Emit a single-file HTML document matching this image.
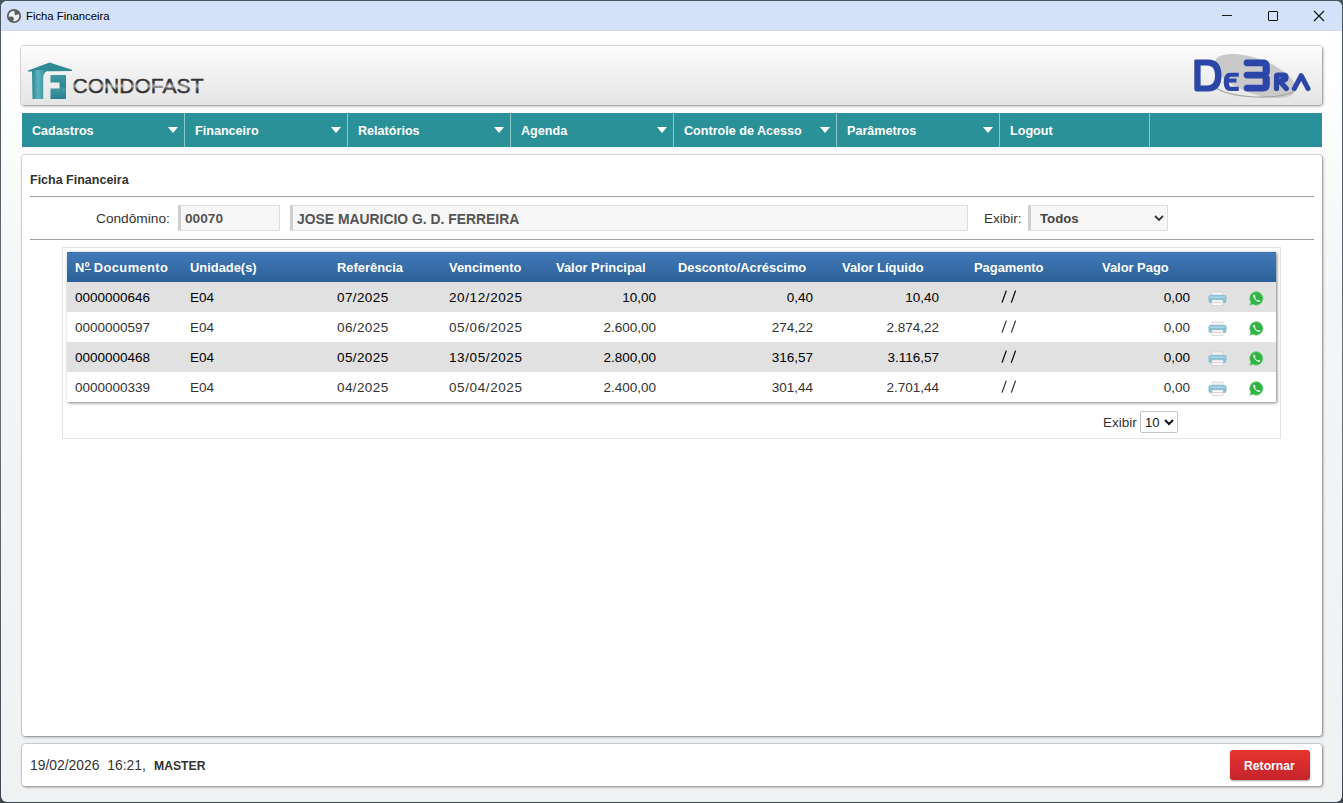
<!DOCTYPE html>
<html><head><meta charset="utf-8"><style>
*{margin:0;padding:0;box-sizing:border-box}
html,body{width:1343px;height:803px;overflow:hidden;font-family:"Liberation Sans",sans-serif}
body{background:linear-gradient(to bottom,#4a5560,#6a7078 50%,#3c4650);position:relative}
.tx{position:absolute;line-height:20px;white-space:pre}
.abs{position:absolute}
#win{position:absolute;left:1px;top:1px;width:1341px;height:801px;border-radius:6px;overflow:hidden;background:linear-gradient(to bottom,#ffffff 0px,#ffffff 60px,#f4f5f6 300px,#eff1f2 803px)}
#title{position:absolute;left:0;top:0;width:1341px;height:30px;background:#d3e2f8;border-bottom:1px solid #d0dbea}
.card{position:absolute;background:#fff;border-radius:3px;box-shadow:0 0 0 0.5px rgba(0,0,0,.14),0 0 2px rgba(0,0,0,.18),1px 1px 3px rgba(0,0,0,.38)}
#hdr{left:21px;top:46px;width:1301px;height:59px;background:linear-gradient(to bottom,#fdfdfd,#f1f1f1 45%,#e5e5e5)}
#menu{position:absolute;left:22px;top:113px;width:1300px;height:34px;background:#2b9199}
.sep{position:absolute;top:113px;width:1px;height:34px;background:#8cc8cc}
.tri{position:absolute;width:0;height:0;border-left:5px solid transparent;border-right:5px solid transparent;border-top:6px solid #fff}
#main{left:22px;top:155px;width:1300px;height:581px}
#foot{left:22px;top:744px;width:1300px;height:42px}
.rule{position:absolute;height:1px;background:#a0a0a0}
.inp{position:absolute;background:#f7f7f7;border:1px solid #dedede;border-left:3px solid #cfcfcf}
</style></head><body>
<div id="win"><div id="title"><svg class="abs" style="left:4.5px;top:6.5px" width="16" height="16" viewBox="0 0 16 16">
<circle cx="8" cy="8" r="6.2" fill="#eef3fb" stroke="#5c5c5c" stroke-width="1.8"/>
<path d="M8 1.7 C10.5 1.8 13 3.5 14 6 C13 6.5 11.5 6 10.5 6.8 C9.8 7.5 9 7 8.6 6.2 C8.3 5.2 9.2 4.4 8.4 3.6 C7.6 2.9 6.8 2.4 8 1.7 Z" fill="#5c5c5c"/>
<path d="M2.2 9.6 C3.5 8.3 5.5 8.4 6.8 9 C7.6 9.4 8.3 10.4 7.8 11.4 C7.2 12.4 6.4 13 6.6 14.1 C4.6 13.6 2.8 11.9 2.2 9.6 Z" fill="#5c5c5c"/>
</svg></div></div>
<div class="tx" style="left:26px;top:6px;font-size:11.3px;font-weight:normal;color:#000;">Ficha Financeira</div>
<div class="abs" style="left:1222px;top:15px;width:10px;height:1px;background:#1a1a1a"></div><div class="abs" style="left:1268px;top:11px;width:10px;height:10px;border:1.2px solid #111;border-radius:1px"></div><svg class="abs" style="left:1313px;top:10px" width="12" height="12" viewBox="0 0 12 12"><path d="M1 1L11 11M11 1L1 11" stroke="#111" stroke-width="1.1"/></svg>
<div class="card" id="hdr"></div>
<svg class="abs" style="left:0;top:0" width="220" height="110" viewBox="0 0 220 110">
<defs>
<linearGradient id="tg" x1="0" y1="0" x2="0" y2="1"><stop offset="0" stop-color="#3f9aa6"/><stop offset="0.45" stop-color="#2f8794"/><stop offset="0.6" stop-color="#3d98a3"/><stop offset="1" stop-color="#2a7f8c"/></linearGradient>
<linearGradient id="tg2" x1="0" y1="0" x2="1" y2="0"><stop offset="0" stop-color="#2c8591"/><stop offset="0.35" stop-color="#5cb3bf"/><stop offset="0.7" stop-color="#3a97a3"/><stop offset="1" stop-color="#2c8390"/></linearGradient>
<linearGradient id="mg" x1="0" y1="0" x2="0" y2="1"><stop offset="0" stop-color="#2a2a2a"/><stop offset="0.35" stop-color="#3a3a3a"/><stop offset="0.5" stop-color="#a0a0a0"/><stop offset="0.65" stop-color="#3a3a3a"/><stop offset="1" stop-color="#222"/></linearGradient>
</defs>
<path d="M28 70.5 L49.5 62.5 L72 69.8 L72 71 L28 71.5 Z" fill="#2f8a96"/>
<path d="M32 70 L49 70 C45 71 43.2 74 43.2 79 L43.2 99 L32.5 99 Z" fill="url(#tg2)"/>
<path d="M50.5 75 L66 75 L66 99 L50.5 99 L50.5 88.5 L59.5 88.5 L59.5 82.5 L50.5 82.5 Z" fill="url(#tg)"/>
<text x="72.5" y="93" font-family="Liberation Sans" font-weight="normal" font-size="20" textLength="131" lengthAdjust="spacingAndGlyphs" fill="url(#mg)" stroke="url(#mg)" stroke-width="0.45">CONDOFAST</text>
</svg><svg class="abs" style="left:1180px;top:45px" width="140" height="60" viewBox="1180 45 140 60">
<ellipse cx="1255" cy="76" rx="43" ry="17.5" transform="rotate(20 1255 76)" fill="#c9c9c9"/><path d="M1216 88 C1230 97 1270 101 1293 92" fill="none" stroke="#a4a4a4" stroke-width="1.2"/>
<g fill="#2b45a8">
<path d="M1195.5 59.6 L1208 59.6 C1217 59.6 1221.5 65 1221.5 75.5 C1221.5 86 1217 91.6 1208 91.6 L1197 91.6 C1195.5 91.6 1194.3 90.5 1194.3 89 L1194.3 61 C1194.3 60.2 1194.8 59.6 1195.5 59.6 Z M1200.6 65.4 L1200.6 85.4 L1207 85.4 C1212.5 85.4 1215 82 1215 75.4 C1215 68.8 1212.5 65.4 1207 65.4 Z" fill-rule="evenodd"/>
<path d="M1230 72.7 L1238.8 72.7 L1238.8 76.8 L1231 76.8 C1229.5 76.8 1229 77.5 1229 78.6 L1236.5 78.6 L1236.5 82.4 L1229 82.4 C1229 85.5 1229.8 86.8 1231.5 86.8 L1238.8 86.8 L1238.8 91 L1230.5 91 C1226 91 1223.8 88 1223.8 82 C1223.8 76 1226 72.7 1230 72.7 Z"/>
<path d="M1246.5 59.5 L1263 59.5 C1267.5 59.5 1269.8 62 1269.8 66.5 L1269.8 72.5 C1269.8 74 1269 75 1268 75.2 C1269 75.4 1269.8 76.5 1269.8 78 L1269.8 84.5 C1269.8 89 1267.5 91.4 1263 91.4 L1246.8 91.4 C1245 91.4 1243.6 90 1243.6 88 C1243.6 86.2 1245 84.8 1246.8 84.8 L1262.6 84.8 L1262.6 78.5 L1246.8 78.5 C1245 78.5 1243.6 77 1243.6 75.2 C1243.6 73.3 1245 71.8 1246.8 71.8 L1262.6 71.8 L1262.6 66.2 L1246.5 66.2 C1244.8 66.2 1243.6 64.8 1243.6 62.9 C1243.6 61 1244.8 59.5 1246.5 59.5 Z"/>
<path d="M1276.5 88.5 L1276.5 76.5 C1276.5 75.6 1277 75.2 1278 75.2 L1283.5 75.2 C1285.2 75.2 1286 76 1286 77.5 C1286 79 1285 80 1283 80.3 L1279.5 81 L1286.3 88.6" fill="none" stroke="#2b45a8" stroke-width="5.2" stroke-linecap="round" stroke-linejoin="round"/>
<path d="M1294.3 88.6 L1301.2 75.6 L1308 88.6" fill="none" stroke="#2b45a8" stroke-width="5" stroke-linecap="round" stroke-linejoin="round"/>
</g>
</svg><div id="menu"></div>
<div class="tx" style="left:32px;top:121px;font-size:12.6px;font-weight:bold;color:#fff;">Cadastros</div>
<div class="tri" style="left:168px;top:127px"></div><div class="sep" style="left:184px"></div><div class="tx" style="left:195px;top:121px;font-size:12.6px;font-weight:bold;color:#fff;">Financeiro</div>
<div class="tri" style="left:331px;top:127px"></div><div class="sep" style="left:347px"></div><div class="tx" style="left:358px;top:121px;font-size:12.6px;font-weight:bold;color:#fff;">Relatórios</div>
<div class="tri" style="left:494px;top:127px"></div><div class="sep" style="left:510px"></div><div class="tx" style="left:521px;top:121px;font-size:12.6px;font-weight:bold;color:#fff;">Agenda</div>
<div class="tri" style="left:657px;top:127px"></div><div class="sep" style="left:673px"></div><div class="tx" style="left:684px;top:121px;font-size:12.6px;font-weight:bold;color:#fff;">Controle de Acesso</div>
<div class="tri" style="left:820px;top:127px"></div><div class="sep" style="left:836px"></div><div class="tx" style="left:847px;top:121px;font-size:12.6px;font-weight:bold;color:#fff;">Parâmetros</div>
<div class="tri" style="left:983px;top:127px"></div><div class="sep" style="left:999px"></div><div class="tx" style="left:1010px;top:121px;font-size:12.6px;font-weight:bold;color:#fff;">Logout</div>
<div class="sep" style="left:1149px"></div>
<div class="card" id="main"></div>
<div class="tx" style="left:30px;top:170px;font-size:12.5px;font-weight:bold;color:#333;">Ficha Financeira</div>
<div class="rule" style="left:30px;top:196px;width:1284px"></div><div class="rule" style="left:30px;top:239px;width:1284px"></div>
<div class="tx" style="left:96px;top:209px;font-size:13.7px;font-weight:normal;color:#333;">Condômino:</div>
<div class="inp" style="left:178px;top:205px;width:102px;height:26px"></div><div class="tx" style="left:185px;top:209px;font-size:13.7px;font-weight:bold;color:#555;">00070</div>
<div class="inp" style="left:290px;top:205px;width:678px;height:26px"></div><div class="tx" style="left:297px;top:209px;font-size:13.9px;font-weight:bold;color:#555;">JOSE MAURICIO G. D. FERREIRA</div>
<div class="tx" style="left:984px;top:209px;font-size:13.5px;font-weight:normal;color:#333;">Exibir:</div>
<div class="inp" style="left:1028px;top:205px;width:140px;height:26px"></div><div class="tx" style="left:1040px;top:209px;font-size:13.2px;font-weight:bold;color:#444;">Todos</div>
<svg class="abs" style="left:1154px;top:215px" width="10" height="7" viewBox="0 0 10 7"><path d="M1 1L5 5L9 1" fill="none" stroke="#333" stroke-width="1.8"/></svg>
<div class="abs" style="left:62px;top:247px;width:1219px;height:192px;border:1px solid #e3e3e3;background:#fff"></div>
<div class="abs" style="left:67px;top:252px;width:1209px;height:150px;box-shadow:1px 1px 3px rgba(0,0,0,.5);background:#fff"></div><div class="abs" style="left:67px;top:252px;width:1209px;height:30px;background:linear-gradient(to bottom,#33649a 0px,#4179b8 1px,#2c6299 29px,#285a8e 30px)"></div><div class="abs" style="left:67px;top:282px;width:1209px;height:30px;background:#e1e1e1"></div><div class="abs" style="left:67px;top:342px;width:1209px;height:30px;background:#e1e1e1"></div>
<div class="tx" style="left:75px;top:258px;font-size:12.9px;font-weight:bold;color:#fff;letter-spacing:0.4px">Nº Documento</div>
<div class="tx" style="left:190px;top:258px;font-size:12.9px;font-weight:bold;color:#fff;">Unidade(s)</div>
<div class="tx" style="left:337px;top:258px;font-size:12.9px;font-weight:bold;color:#fff;">Referência</div>
<div class="tx" style="left:449px;top:258px;font-size:12.9px;font-weight:bold;color:#fff;">Vencimento</div>
<div class="tx" style="left:556px;top:258px;font-size:12.9px;font-weight:bold;color:#fff;">Valor Principal</div>
<div class="tx" style="left:678px;top:258px;font-size:12.9px;font-weight:bold;color:#fff;">Desconto/Acréscimo</div>
<div class="tx" style="left:842px;top:258px;font-size:12.9px;font-weight:bold;color:#fff;">Valor Líquido</div>
<div class="tx" style="left:974px;top:258px;font-size:12.9px;font-weight:bold;color:#fff;">Pagamento</div>
<div class="tx" style="left:1102px;top:258px;font-size:12.9px;font-weight:bold;color:#fff;">Valor Pago</div>
<div class="abs" style="left:85px;top:269px;width:6px;height:1px;background:#fff"></div>
<div class="tx" style="left:75px;top:288px;font-size:13.5px;font-weight:normal;color:#000;">0000000646</div>
<div class="tx" style="left:190px;top:288px;font-size:13.5px;font-weight:normal;color:#000;">E04</div>
<div class="tx" style="left:337px;top:288px;font-size:13.5px;font-weight:normal;color:#000;letter-spacing:0.4px">07/2025</div>
<div class="tx" style="left:449px;top:288px;font-size:13.5px;font-weight:normal;color:#000;letter-spacing:0.6px">20/12/2025</div>
<div class="tx" style="right:687px;top:288px;font-size:13.5px;font-weight:normal;color:#000;">10,00</div>
<div class="tx" style="right:530px;top:288px;font-size:13.5px;font-weight:normal;color:#000;">0,40</div>
<div class="tx" style="right:404px;top:288px;font-size:13.5px;font-weight:normal;color:#000;">10,40</div>
<svg class="abs" style="left:1000px;top:290px" width="18" height="14" viewBox="0 0 18 14"><path d="M2 12.6L6.3 0.6M11.3 12.6L15.6 0.6" stroke="#000" stroke-width="1.25"/></svg><div class="tx" style="right:153px;top:288px;font-size:13.5px;font-weight:normal;color:#000;">0,00</div>
<svg class="abs" style="left:1208px;top:291px" width="19" height="16" viewBox="0 0 19 16">
<rect x="4" y="1" width="11" height="3" fill="#f4f4f4" stroke="#c8c8c8" stroke-width="0.6"/>
<rect x="0.5" y="4" width="18" height="8" rx="2.2" fill="#86c0d6"/>
<rect x="2" y="5.5" width="15" height="1.3" fill="#b0dbe9"/>
<rect x="4" y="9" width="11" height="5.5" fill="#fafafa" stroke="#c8c8c8" stroke-width="0.6"/>
<rect x="5" y="11.2" width="9" height="0.8" fill="#e8c0c0"/>
</svg><svg class="abs" style="left:1249px;top:291px" width="15" height="15" viewBox="0 0 15 15">
<path d="M7.5 0.6 A6.8 6.8 0 1 1 4.0 13.4 L0.7 14.3 L1.7 11.1 A6.8 6.8 0 0 1 7.5 0.6Z" fill="#2fb544" stroke="#8fd89a" stroke-width="0.7"/>
<path d="M4.6 3.8 C4.0 4.6 4.1 6.0 5.4 7.8 C6.8 9.8 8.6 11.0 10.0 11.0 C10.8 11.0 11.3 10.3 11.2 9.8 L9.8 9.0 C9.4 8.9 9.1 9.6 8.8 9.6 C8.0 9.3 6.3 7.8 5.9 6.8 C5.9 6.4 6.6 6.2 6.5 5.7 L5.8 4.0 C5.5 3.6 5.0 3.5 4.6 3.8Z" fill="#fff"/>
</svg>
<div class="tx" style="left:75px;top:318px;font-size:13.5px;font-weight:normal;color:#333;">0000000597</div>
<div class="tx" style="left:190px;top:318px;font-size:13.5px;font-weight:normal;color:#333;">E04</div>
<div class="tx" style="left:337px;top:318px;font-size:13.5px;font-weight:normal;color:#333;letter-spacing:0.4px">06/2025</div>
<div class="tx" style="left:449px;top:318px;font-size:13.5px;font-weight:normal;color:#333;letter-spacing:0.6px">05/06/2025</div>
<div class="tx" style="right:687px;top:318px;font-size:13.5px;font-weight:normal;color:#333;">2.600,00</div>
<div class="tx" style="right:530px;top:318px;font-size:13.5px;font-weight:normal;color:#333;">274,22</div>
<div class="tx" style="right:404px;top:318px;font-size:13.5px;font-weight:normal;color:#333;">2.874,22</div>
<svg class="abs" style="left:1000px;top:320px" width="18" height="14" viewBox="0 0 18 14"><path d="M2 12.6L6.3 0.6M11.3 12.6L15.6 0.6" stroke="#333" stroke-width="1.25"/></svg><div class="tx" style="right:153px;top:318px;font-size:13.5px;font-weight:normal;color:#333;">0,00</div>
<svg class="abs" style="left:1208px;top:321px" width="19" height="16" viewBox="0 0 19 16">
<rect x="4" y="1" width="11" height="3" fill="#f4f4f4" stroke="#c8c8c8" stroke-width="0.6"/>
<rect x="0.5" y="4" width="18" height="8" rx="2.2" fill="#86c0d6"/>
<rect x="2" y="5.5" width="15" height="1.3" fill="#b0dbe9"/>
<rect x="4" y="9" width="11" height="5.5" fill="#fafafa" stroke="#c8c8c8" stroke-width="0.6"/>
<rect x="5" y="11.2" width="9" height="0.8" fill="#e8c0c0"/>
</svg><svg class="abs" style="left:1249px;top:321px" width="15" height="15" viewBox="0 0 15 15">
<path d="M7.5 0.6 A6.8 6.8 0 1 1 4.0 13.4 L0.7 14.3 L1.7 11.1 A6.8 6.8 0 0 1 7.5 0.6Z" fill="#2fb544" stroke="#8fd89a" stroke-width="0.7"/>
<path d="M4.6 3.8 C4.0 4.6 4.1 6.0 5.4 7.8 C6.8 9.8 8.6 11.0 10.0 11.0 C10.8 11.0 11.3 10.3 11.2 9.8 L9.8 9.0 C9.4 8.9 9.1 9.6 8.8 9.6 C8.0 9.3 6.3 7.8 5.9 6.8 C5.9 6.4 6.6 6.2 6.5 5.7 L5.8 4.0 C5.5 3.6 5.0 3.5 4.6 3.8Z" fill="#fff"/>
</svg>
<div class="tx" style="left:75px;top:348px;font-size:13.5px;font-weight:normal;color:#000;">0000000468</div>
<div class="tx" style="left:190px;top:348px;font-size:13.5px;font-weight:normal;color:#000;">E04</div>
<div class="tx" style="left:337px;top:348px;font-size:13.5px;font-weight:normal;color:#000;letter-spacing:0.4px">05/2025</div>
<div class="tx" style="left:449px;top:348px;font-size:13.5px;font-weight:normal;color:#000;letter-spacing:0.6px">13/05/2025</div>
<div class="tx" style="right:687px;top:348px;font-size:13.5px;font-weight:normal;color:#000;">2.800,00</div>
<div class="tx" style="right:530px;top:348px;font-size:13.5px;font-weight:normal;color:#000;">316,57</div>
<div class="tx" style="right:404px;top:348px;font-size:13.5px;font-weight:normal;color:#000;">3.116,57</div>
<svg class="abs" style="left:1000px;top:350px" width="18" height="14" viewBox="0 0 18 14"><path d="M2 12.6L6.3 0.6M11.3 12.6L15.6 0.6" stroke="#000" stroke-width="1.25"/></svg><div class="tx" style="right:153px;top:348px;font-size:13.5px;font-weight:normal;color:#000;">0,00</div>
<svg class="abs" style="left:1208px;top:351px" width="19" height="16" viewBox="0 0 19 16">
<rect x="4" y="1" width="11" height="3" fill="#f4f4f4" stroke="#c8c8c8" stroke-width="0.6"/>
<rect x="0.5" y="4" width="18" height="8" rx="2.2" fill="#86c0d6"/>
<rect x="2" y="5.5" width="15" height="1.3" fill="#b0dbe9"/>
<rect x="4" y="9" width="11" height="5.5" fill="#fafafa" stroke="#c8c8c8" stroke-width="0.6"/>
<rect x="5" y="11.2" width="9" height="0.8" fill="#e8c0c0"/>
</svg><svg class="abs" style="left:1249px;top:351px" width="15" height="15" viewBox="0 0 15 15">
<path d="M7.5 0.6 A6.8 6.8 0 1 1 4.0 13.4 L0.7 14.3 L1.7 11.1 A6.8 6.8 0 0 1 7.5 0.6Z" fill="#2fb544" stroke="#8fd89a" stroke-width="0.7"/>
<path d="M4.6 3.8 C4.0 4.6 4.1 6.0 5.4 7.8 C6.8 9.8 8.6 11.0 10.0 11.0 C10.8 11.0 11.3 10.3 11.2 9.8 L9.8 9.0 C9.4 8.9 9.1 9.6 8.8 9.6 C8.0 9.3 6.3 7.8 5.9 6.8 C5.9 6.4 6.6 6.2 6.5 5.7 L5.8 4.0 C5.5 3.6 5.0 3.5 4.6 3.8Z" fill="#fff"/>
</svg>
<div class="tx" style="left:75px;top:378px;font-size:13.5px;font-weight:normal;color:#333;">0000000339</div>
<div class="tx" style="left:190px;top:378px;font-size:13.5px;font-weight:normal;color:#333;">E04</div>
<div class="tx" style="left:337px;top:378px;font-size:13.5px;font-weight:normal;color:#333;letter-spacing:0.4px">04/2025</div>
<div class="tx" style="left:449px;top:378px;font-size:13.5px;font-weight:normal;color:#333;letter-spacing:0.6px">05/04/2025</div>
<div class="tx" style="right:687px;top:378px;font-size:13.5px;font-weight:normal;color:#333;">2.400,00</div>
<div class="tx" style="right:530px;top:378px;font-size:13.5px;font-weight:normal;color:#333;">301,44</div>
<div class="tx" style="right:404px;top:378px;font-size:13.5px;font-weight:normal;color:#333;">2.701,44</div>
<svg class="abs" style="left:1000px;top:380px" width="18" height="14" viewBox="0 0 18 14"><path d="M2 12.6L6.3 0.6M11.3 12.6L15.6 0.6" stroke="#333" stroke-width="1.25"/></svg><div class="tx" style="right:153px;top:378px;font-size:13.5px;font-weight:normal;color:#333;">0,00</div>
<svg class="abs" style="left:1208px;top:381px" width="19" height="16" viewBox="0 0 19 16">
<rect x="4" y="1" width="11" height="3" fill="#f4f4f4" stroke="#c8c8c8" stroke-width="0.6"/>
<rect x="0.5" y="4" width="18" height="8" rx="2.2" fill="#86c0d6"/>
<rect x="2" y="5.5" width="15" height="1.3" fill="#b0dbe9"/>
<rect x="4" y="9" width="11" height="5.5" fill="#fafafa" stroke="#c8c8c8" stroke-width="0.6"/>
<rect x="5" y="11.2" width="9" height="0.8" fill="#e8c0c0"/>
</svg><svg class="abs" style="left:1249px;top:381px" width="15" height="15" viewBox="0 0 15 15">
<path d="M7.5 0.6 A6.8 6.8 0 1 1 4.0 13.4 L0.7 14.3 L1.7 11.1 A6.8 6.8 0 0 1 7.5 0.6Z" fill="#2fb544" stroke="#8fd89a" stroke-width="0.7"/>
<path d="M4.6 3.8 C4.0 4.6 4.1 6.0 5.4 7.8 C6.8 9.8 8.6 11.0 10.0 11.0 C10.8 11.0 11.3 10.3 11.2 9.8 L9.8 9.0 C9.4 8.9 9.1 9.6 8.8 9.6 C8.0 9.3 6.3 7.8 5.9 6.8 C5.9 6.4 6.6 6.2 6.5 5.7 L5.8 4.0 C5.5 3.6 5.0 3.5 4.6 3.8Z" fill="#fff"/>
</svg>
<div class="tx" style="left:1103px;top:413px;font-size:13.5px;font-weight:normal;color:#333;">Exibir</div>
<div class="abs" style="left:1140px;top:411px;width:38px;height:22px;border:1px solid #c4c4c4;border-radius:2px;background:#fff"></div><div class="tx" style="left:1145px;top:413px;font-size:13px;font-weight:normal;color:#111;">10</div>
<svg class="abs" style="left:1164px;top:419px" width="10" height="7" viewBox="0 0 10 7"><path d="M1 1L5 5L9 1" fill="none" stroke="#111" stroke-width="2"/></svg>
<div class="card" id="foot"></div>
<div class="tx" style="left:30px;top:755px;font-size:13.9px;font-weight:normal;color:#333;">19/02/2026  16:21,</div>
<div class="tx" style="left:154px;top:756px;font-size:12.2px;font-weight:bold;color:#333;">MASTER</div>
<div class="abs" style="left:1230px;top:750px;width:80px;height:30px;border-radius:3px;background:linear-gradient(to bottom,#e8352f,#c4232b);box-shadow:0 1px 2px rgba(0,0,0,.35)"></div><div class="tx" style="left:1244px;top:756px;font-size:12.2px;font-weight:bold;color:#fff;">Retornar</div>
</body></html>
